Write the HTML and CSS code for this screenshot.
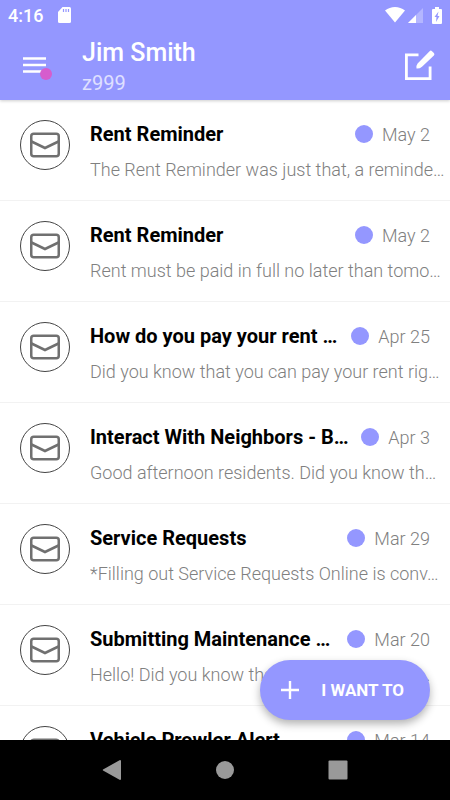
FILE: index.html
```html
<!DOCTYPE html>
<html lang="en">
<head>
<meta charset="utf-8">
<meta name="viewport" content="width=device-width, initial-scale=1">
<title>Messages</title>
<link rel="stylesheet" href="styles.css">
</head>
<body>
<svg class="defs" width="0" height="0" aria-hidden="true">
  <symbol id="mail" viewBox="0 0 30 26">
    <rect x="1.25" y="1.75" width="27.5" height="22.5" rx="2.5" fill="none" stroke="#707070" stroke-width="2.5"/>
    <path d="M1.5 9.5 15 16 28.5 9.5" fill="none" stroke="#707070" stroke-width="2.5"/>
  </symbol>
</svg>
<div class="screen">
  <header class="top">
    <div class="status">
      <span class="clock">4:16</span>
      <svg class="sd" width="13" height="16" viewBox="0 0 13 16" aria-hidden="true">
        <path fill="#fff" d="M4.500 0H11.500Q13 0 13 1.500V14.500Q13 16 11.500 16H1.500Q0 16 0 14.500V5Z"/>
        <path stroke="#9497ff" stroke-width="1.200" d="M5.500 2V5M8 2V5M10.500 2V5"/>
      </svg>
      <div class="signals">
        <svg width="20" height="16" viewBox="0 0 20 16" aria-hidden="true"><path fill="#fff" d="M0 3.500Q4.500 0 10 0T20 3.500L10 15.500Z"/></svg>
        <svg class="cell" width="15" height="15" viewBox="0 0 15 15" aria-hidden="true"><path fill="#fff" opacity=".3" d="M15 0V15H0Z"/><path fill="#fff" d="M8 7V15H0Z"/></svg>
        <svg class="battery" width="10" height="17" viewBox="0 0 10 17" aria-hidden="true"><path fill="#fff" d="M3 0H7V2H9Q10 2 10 3V16Q10 17 9 17H1Q0 17 0 16V3Q0 2 1 2H3Z"/><path fill="#9497ff" d="M6.500 4.500 2.500 10H4.500L4 15 7.500 9H5.500Z"/></svg>
      </div>
    </div>
    <div class="bar">
      <button class="icon-button menu" type="button" aria-label="Open menu">
        <svg width="24" height="16" viewBox="0 0 24 16" aria-hidden="true"><path stroke="#fff" stroke-width="2.400" d="M0 1.500H23M0 8H23M0 14.500H23"/></svg>
        <span class="badge"></span>
      </button>
      <div class="who">
        <h1>Jim Smith</h1>
        <p>z999</p>
      </div>
      <button class="icon-button" type="button" aria-label="Compose message">
        <svg width="31" height="31" viewBox="0 0 31 31" aria-hidden="true">
          <path fill="none" stroke="#fff" stroke-width="2.800" d="M14.500 4.900H2.400V28.600H26.100V16.500"/>
          <path fill="#fff" d="M12.500 18.500Q12 15.500 13.600 13.500L25.600 1.200Q26.800 0 28 1.200L29.900 3Q31 4.200 29.900 5.400L18 16.700Q15.500 18.800 12.500 18.500Z"/>
        </svg>
      </button>
    </div>
  </header>
  <main>
    <ul class="messages">
      <li><span class="avatar"><svg width="30" height="26" aria-hidden="true"><use href="#mail"/></svg></span><div class="body"><div class="line"><h2>Rent Reminder</h2><span class="dot"></span><time>May 2</time></div><p>The Rent Reminder was just that, a reminde…</p></div></li>
      <li><span class="avatar"><svg width="30" height="26" aria-hidden="true"><use href="#mail"/></svg></span><div class="body"><div class="line"><h2>Rent Reminder</h2><span class="dot"></span><time>May 2</time></div><p>Rent must be paid in full no later than tomo…</p></div></li>
      <li><span class="avatar"><svg width="30" height="26" aria-hidden="true"><use href="#mail"/></svg></span><div class="body"><div class="line"><h2>How do you pay your rent …</h2><span class="dot"></span><time>Apr 25</time></div><p>Did you know that you can pay your rent rig…</p></div></li>
      <li><span class="avatar"><svg width="30" height="26" aria-hidden="true"><use href="#mail"/></svg></span><div class="body"><div class="line"><h2>Interact With Neighbors - B…</h2><span class="dot"></span><time>Apr 3</time></div><p>Good afternoon residents. Did you know th…</p></div></li>
      <li><span class="avatar"><svg width="30" height="26" aria-hidden="true"><use href="#mail"/></svg></span><div class="body"><div class="line"><h2>Service Requests</h2><span class="dot"></span><time>Mar 29</time></div><p>*Filling out Service Requests Online is conv…</p></div></li>
      <li><span class="avatar"><svg width="30" height="26" aria-hidden="true"><use href="#mail"/></svg></span><div class="body"><div class="line"><h2>Submitting Maintenance …</h2><span class="dot"></span><time>Mar 20</time></div><p>Hello! Did you know that you can submit a…</p></div></li>
      <li><span class="avatar"><svg width="30" height="26" aria-hidden="true"><use href="#mail"/></svg></span><div class="body"><div class="line"><h2>Vehicle Prowler Alert</h2><span class="dot"></span><time>Mar 14</time></div></div></li>
    </ul>
    <button class="fab" type="button">
      <svg width="18" height="18" viewBox="0 0 18 18" aria-hidden="true"><path stroke="#fff" stroke-width="2.400" d="M9 0V18M0 9H18"/></svg>
      I WANT TO
    </button>
  </main>
  <nav class="system">
    <button type="button" aria-label="Back"><svg width="20" height="20" viewBox="0 0 20 20" aria-hidden="true"><path fill="#999" d="M18 0Q19 0 19 1V19Q19 20 18 20L1 10.500Q.5 10 1 9.500Z"/></svg></button>
    <button type="button" aria-label="Home"><svg width="20" height="20" viewBox="0 0 20 20" aria-hidden="true"><circle cx="10" cy="10" r="9" fill="#999"/></svg></button>
    <button type="button" aria-label="Recent apps"><svg width="20" height="20" viewBox="0 0 20 20" aria-hidden="true"><rect x=".5" y=".5" width="19" height="19" rx="1" fill="#999"/></svg></button>
  </nav>
</div>
</body>
</html>
```
FILE: styles.css
```css
* {
  box-sizing: border-box;
}

body,
h1,
h2,
p,
ul {
  margin: 0;
  padding: 0;
}

body {
  font-family: Roboto, "Liberation Sans", sans-serif;
  background: #fff;
}

button {
  border: 0;
  padding: 0;
  background: none;
  font: inherit;
}

svg {
  display: block;
  flex: none;
}

.defs {
  position: absolute;
}

.screen {
  display: flex;
  flex-direction: column;
  height: 100vh;
}

.top {
  position: relative;
  z-index: 1;
  background: #9497ff;
  color: #fff;
  box-shadow: 0 1px 3px rgba(0, 0, 0, 0.2);
}

.status {
  display: flex;
  align-items: center;
  height: 30px;
  padding: 0 8px;
}

.clock {
  font-size: 18px;
  font-weight: 500;
}

.sd {
  margin-left: 15px;
}

.signals {
  display: flex;
  align-items: center;
  margin-left: auto;
}

.cell {
  margin-left: 3px;
}

.battery {
  margin-left: 9px;
}

.bar {
  display: flex;
  align-items: center;
  height: 70px;
  padding: 0 15px 0 23px;
}

.icon-button {
  position: relative;
  color: inherit;
}

.badge {
  position: absolute;
  right: -5px;
  bottom: -7px;
  width: 12px;
  height: 12px;
  border-radius: 50%;
  background: #d65dcd;
}

.who {
  flex: 1;
  margin-left: 35px;
  padding-top: 4px;
}

.who h1 {
  font-size: 25px;
  line-height: 32px;
  font-weight: 500;
}

.who p {
  font-size: 20px;
  line-height: 28px;
  opacity: 0.7;
}

main {
  position: relative;
  flex: 1;
  min-height: 0;
  overflow: hidden;
}

.messages {
  list-style: none;
}

.messages li {
  display: flex;
  gap: 20px;
  height: 101px;
  padding: 20px 4px 0 20px;
  border-bottom: 1px solid #f2f2f2;
}

.avatar {
  display: flex;
  flex: none;
  align-items: center;
  justify-content: center;
  width: 50px;
  height: 50px;
  border: 1px solid #444;
  border-radius: 50%;
}

.body {
  flex: 1;
  min-width: 0;
}

.line {
  display: flex;
  align-items: center;
  height: 28px;
  padding-right: 16px;
}

.line h2 {
  flex: 1;
  font-size: 20px;
  font-weight: 700;
  color: #000;
  white-space: nowrap;
}

.dot {
  flex: none;
  width: 18px;
  height: 18px;
  margin-right: 9px;
  border-radius: 50%;
  background: #9497ff;
}

.line time {
  font-size: 18px;
  font-weight: 300;
  color: #808080;
}

.body p {
  margin-top: 10px;
  overflow: hidden;
  font-size: 18px;
  font-weight: 300;
  line-height: 24px;
  color: #808080;
  white-space: nowrap;
  text-overflow: ellipsis;
}

.fab {
  position: absolute;
  right: 20px;
  bottom: 20px;
  display: flex;
  align-items: center;
  gap: 22px;
  height: 60px;
  padding: 0 26px 0 21px;
  border-radius: 30px;
  background: #9497ff;
  color: #fff;
  font-size: 17px;
  font-weight: 700;
  box-shadow: 0 4px 8px rgba(0, 0, 0, 0.3);
}

.system {
  display: flex;
  align-items: center;
  justify-content: center;
  gap: 93px;
  height: 60px;
  background: #000;
}
```
